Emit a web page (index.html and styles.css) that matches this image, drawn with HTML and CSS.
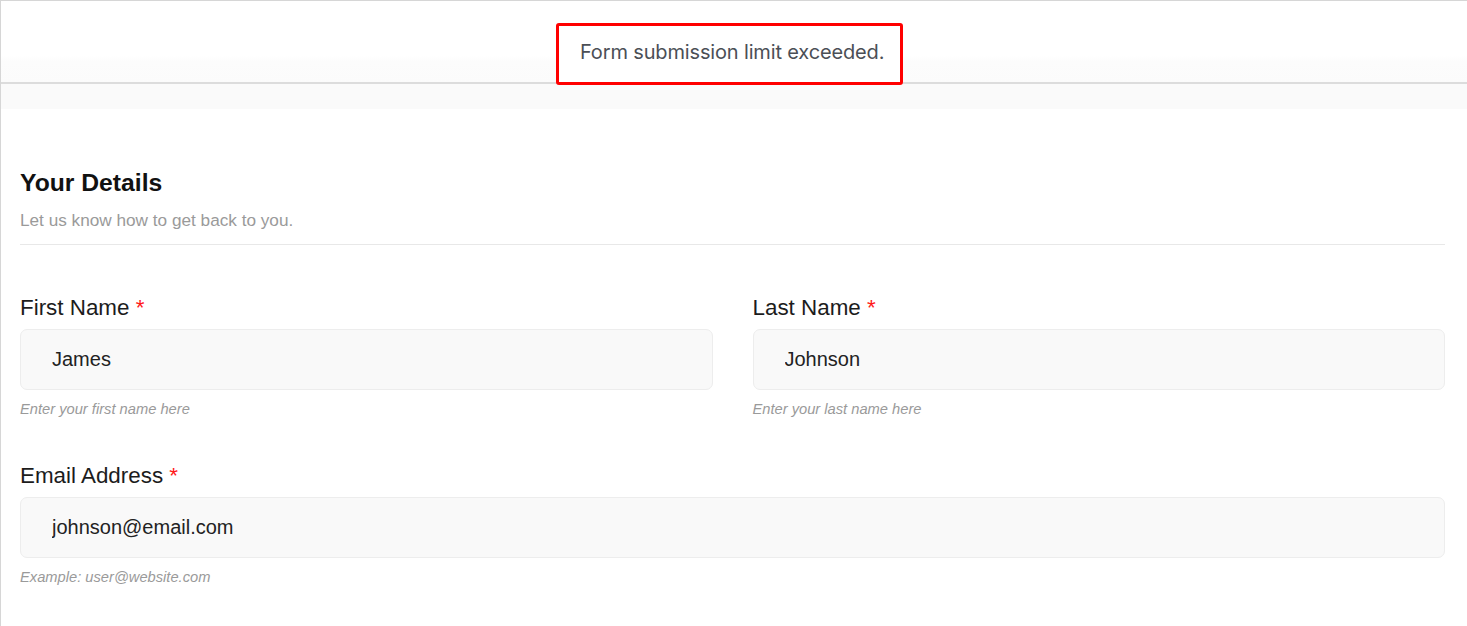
FILE: index.html
```html
<!DOCTYPE html>
<html lang="en">
<head>
<meta charset="utf-8">
<title>Your Details</title>
<link rel="stylesheet" href="styles.css">
</head>
<body>
<div class="frame">
  <div class="topbar"></div>
  <div class="strip"></div>
  <div class="toast">Form submission limit exceeded.</div>
  <main class="content">
    <h2 class="section-title">Your Details</h2>
    <p class="section-sub">Let us know how to get back to you.</p>
    <hr class="divider">
    <div class="row two">
      <div class="field">
        <label class="label">First Name <span class="req">*</span></label>
        <input class="input" type="text" value="James">
        <div class="help">Enter your first name here</div>
      </div>
      <div class="field">
        <label class="label">Last Name <span class="req">*</span></label>
        <input class="input" type="text" value="Johnson">
        <div class="help">Enter your last name here</div>
      </div>
    </div>
    <div class="row">
      <div class="field">
        <label class="label">Email Address <span class="req">*</span></label>
        <input class="input" type="text" value="johnson@email.com">
        <div class="help">Example: user@website.com</div>
      </div>
    </div>
  </main>
</div>
</body>
</html>
```

FILE: styles.css
```css
html, body {
  margin: 0;
  padding: 0;
  background: #fff;
}
body {
  font-family: "Liberation Sans", Arial, sans-serif;
}
.frame {
  position: relative;
  height: 626px;
  box-sizing: border-box;
  border-top: 1px solid #d6d6d6;
  border-left: 1px solid #d6d6d6;
  overflow: hidden;
}
.topbar {
  height: 81px;
  background: linear-gradient(to bottom, #ffffff 0, #ffffff 68%, #fcfcfc 75%, #fbfbfb 100%);
  border-bottom: 2px solid #dcdcdc;
}
.strip {
  height: 25px;
  background: #fafafa;
}
.toast {
  position: absolute;
  left: 555px;
  top: 22px;
  width: 347px;
  height: 62px;
  box-sizing: border-box;
  border: 3px solid #ff0000;
  border-radius: 3px;
  background: #fff;
  display: flex;
  align-items: center;
  padding: 0 0 4px 21px;
  font-family: Inter, "Liberation Sans", sans-serif;
  font-size: 20px;
  color: #4b4f56;
  letter-spacing: -0.15px;
}
.content {
  padding: 60px 22px 0 19px;
}
.section-title {
  margin: 0;
  font-size: 24.7px;
  line-height: 28px;
  font-weight: bold;
  color: #111;
}
.section-sub {
  margin: 13px 0 0;
  font-size: 17.2px;
  line-height: 20px;
  color: #9a9a9a;
}
.divider {
  margin: 14px 0 0;
  border: 0;
  height: 1px;
  background: #e8e8e8;
}
.row {
  margin-top: 50px;
}
.row + .row {
  margin-top: 45px;
}
.row.two {
  display: grid;
  grid-template-columns: 1fr 1fr;
  column-gap: 40px;
}
.field {
  display: flex;
  flex-direction: column;
}
.label {
  font-size: 22.4px;
  line-height: 26px;
  color: #1c1c1c;
}
.req {
  color: #ff1a1a;
}
.input {
  margin-top: 8px;
  height: 61px;
  box-sizing: border-box;
  border: 1px solid #ededed;
  border-radius: 7px;
  background: #f9f9f9;
  padding: 0 31px;
  font-family: "Liberation Sans", Arial, sans-serif;
  font-size: 20px;
  color: #222;
  outline: none;
  width: 100%;
}
.help {
  margin-top: 10px;
  font-size: 14.7px;
  line-height: 18px;
  font-style: italic;
  color: #9a9a9a;
}
```
